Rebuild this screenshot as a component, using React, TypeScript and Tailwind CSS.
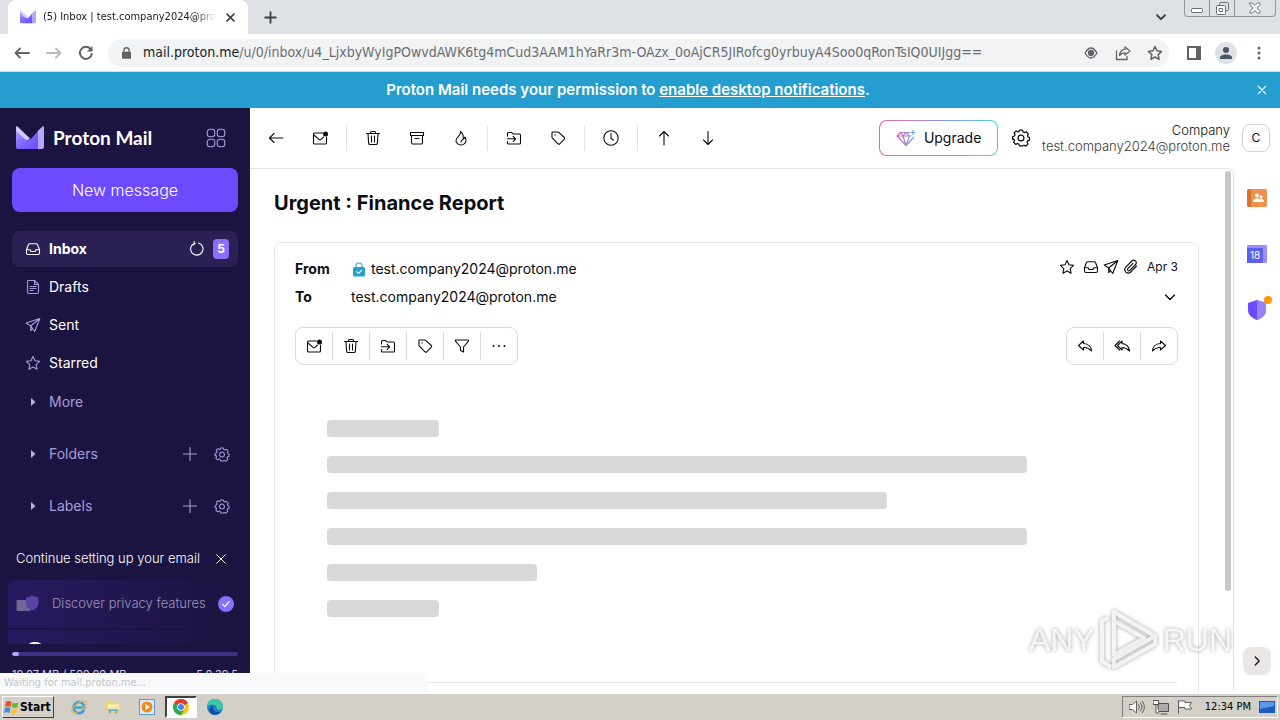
import React from 'react'

const stroke = { fill: 'none', stroke: 'currentColor', strokeLinecap: 'round', strokeLinejoin: 'round' } as const

const paths: Record<string, string> = {
  back: 'M15 8H1.5M6 3.5L1.5 8L6 12.5',
  up: 'M8 15V1.5M3.5 6L8 1.5L12.5 6',
  down: 'M8 1.5V14.5M3.5 10L8 14.5L12.5 10',
  trash: 'M1.5 3.5h13M5.5 3.5v-1a1 1 0 0 1 1-1h3a1 1 0 0 1 1 1v1M3 3.5l.6 9.6a1.5 1.5 0 0 0 1.5 1.4h5.8a1.5 1.5 0 0 0 1.5-1.4L13 3.5M6.5 6v6M9.5 6v6',
  archive: 'M1.5 2.5h13v3h-13zM2.5 5.5v7a1.5 1.5 0 0 0 1.5 1.5h8a1.5 1.5 0 0 0 1.5-1.5v-7M6 8.5h4',
  fire: 'M7.5 1.5c.5 2.5-1 3.8-2.3 5.2C3.6 8.2 3 9 3 10.5a4.9 4.4 0 0 0 10 0c0-1.3-.4-2.600-1-3.500-.4 1.200-1 1.700-1.800 1.900C10.600 6 9.800 3 7.500 1.500zM12 8c-1.500 1-4 1.500-4 4',
  move: 'M1.5 6V3.5a1 1 0 0 1 1-1h3.200l1.300 1.500h6.500a1 1 0 0 1 1 1v8a1 1 0 0 1-1 1h-11a1 1 0 0 1-1-1V11.500M1.500 8.800h8M7.200 6.300l2.500 2.500-2.500 2.500',
  tag: 'M2 2.5v4.700a1.500 1.500 0 0 0 .4 1l5.600 5.600a1.200 1.200 0 0 0 1.700 0l4.600-4.600a1.200 1.200 0 0 0 0-1.700L8.700 2.400a1.500 1.500 0 0 0-1-.4H2.500a.5.5 0 0 0-.5.5z',
  clock: 'M8 .8a7.200 7.200 0 1 1 0 14.400A7.200 7.200 0 0 1 8 .8zM8 3.500v5l2.500 1.500',
  filter: 'M1.5 2h13v1.200L9.500 9v5l-3-1.500V9L1.500 3.200z',
  reply: 'M6.5 3L1.500 7.500l5 4.500V9.500c3.500-.3 5.500.8 8 3.500 0-4-3-7.200-8-7.500z',
  replyAll: 'M8 3L3.500 7.500 8 12V9.500c3 0 5 1 7.500 3.500-.5-4-3-7-7.500-7.500zM5.500 3L1 7.500 5.500 12',
  forward: 'M9.5 3l5 4.500-5 4.500V9.500c-3.500-.3-5.500.8-8 3.500 0-4 3-7.200 8-7.500z',
  star: 'M8 1.5l2 4.300 4.600.6-3.400 3.200.9 4.700L8 12l-4.100 2.300.9-4.700L1.400 6.400 6 5.800z',
  inbox: 'M1.5 8.800l1.900-5a1.500 1.500 0 0 1 1.400-1h6.400a1.500 1.500 0 0 1 1.400 1l1.900 5v3.200a1.500 1.500 0 0 1-1.500 1.500h-10a1.500 1.500 0 0 1-1.500-1.500zM1.500 8.800h3.700l.8 1.700h4l.8-1.700h3.700',
  plane: 'M14.800 1.500L1.200 6l4.500 3 4 5.500zM14.800 1.500L5.700 9v4.500l1.900-2',
  clip: 'M13.500 7l-5.800 6a3.400 3.400 0 0 1-4.900-4.800l6-6.200a2.500 2.500 0 0 1 3.700 3.500l-5.700 5.900a1.300 1.300 0 0 1-1.900-1.800l5-5.200',
  draft: 'M3 1.500h6.500l4 4V13a1.500 1.500 0 0 1-1.500 1.500H4A1.500 1.500 0 0 1 2.500 13V2a.5.5 0 0 1 .5-.5zM9.500 1.500v4h4M5 7.500h6M5 9.500h6M5 11.500h3',
  refresh: 'M5.500 2.200A6.200 6.200 0 1 0 9.500 2M5 .5l1 2-2 1.500',
  plus: 'M8 1.500v13M1.500 8h13',
  close: 'M3 3l10 10M13 3L3 13',
  chevDown: 'M3.500 6L8 10.500 12.500 6',
  chevRight: 'M6 3.500L10.500 8 6 12.500',
  apps: 'M3.200 1h1.600A2.200 2.200 0 0 1 7 3.200v1.600A2.200 2.200 0 0 1 4.800 7H3.200A2.200 2.200 0 0 1 1 4.800V3.200A2.200 2.200 0 0 1 3.200 1zM11.200 1h1.600A2.200 2.200 0 0 1 15 3.200v1.600A2.200 2.200 0 0 1 12.800 7h-1.600A2.200 2.200 0 0 1 9 4.800V3.200A2.200 2.200 0 0 1 11.200 1zM3.200 9h1.600A2.200 2.200 0 0 1 7 11.200v1.600A2.200 2.200 0 0 1 4.800 15H3.200A2.200 2.200 0 0 1 1 12.800v-1.600A2.200 2.200 0 0 1 3.200 9zM11.200 9h1.600a2.200 2.200 0 0 1 2.200 2.200v1.600a2.200 2.200 0 0 1-2.200 2.200h-1.600A2.200 2.200 0 0 1 9 12.800v-1.600A2.200 2.200 0 0 1 11.200 9z',
  gear: 'M6.600 1h2.800l.5 1.700 1.200.5 1.600-.8 1.900 1.900-.8 1.600.5 1.200 1.200.4v2.400l-1.600.6-.5 1.200.8 1.600-1.900 1.900-1.600-.8-1.200.5L9.400 15H6.600L6.100 13.400l-1.200-.5-1.600.8-1.900-1.900.8-1.600-.5-1.200L.6 9.200V6.800l1.600-.6.5-1.200-.8-1.600 1.900-1.700 1.500.9 1-.5zM8 5.400a2.600 2.600 0 1 1 0 5.200 2.600 2.600 0 0 1 0-5.200z',
}

const Icon = (props: { name: string; className?: string; width?: number }) => (
  <svg viewBox="0 0 16 16" strokeWidth={props.width ?? 1.1} {...stroke} className={props.className ?? 'w-4 h-4'} aria-hidden="true">
    <path d={paths[props.name]} />
    {props.name === 'tag' && <circle cx="5" cy="5" r="0.7" fill="currentColor" stroke="none" />}
  </svg>
)

const UnreadIcon = () => (
  <svg viewBox="0 0 16 16" strokeWidth="1.1" {...stroke} className="w-4 h-4" aria-hidden="true">
    <path d="M10.5 3H2.5A1 1 0 0 0 1.5 4v9a1 1 0 0 0 1 1h11a1 1 0 0 0 1-1V7M2 5l5 4.3a1.5 1.5 0 0 0 2 0L11.500 7" />
    <circle cx="13.5" cy="4" r="2.500" fill="currentColor" stroke="none" />
  </svg>
)

const DotsIcon = () => (
  <svg viewBox="0 0 16 16" fill="currentColor" className="w-4 h-4" aria-hidden="true">
    <circle cx="2.5" cy="8" r="1" />
    <circle cx="8" cy="8" r="1" />
    <circle cx="13.5" cy="8" r="1" />
  </svg>
)

const ProtonMark = (props: { id: string; className: string }) => (
  <svg viewBox="0 0 28 24" className={props.className} aria-hidden="true">
    <defs>
      <linearGradient id={props.id} x1="0" y1="0" x2="1" y2="1">
        <stop offset="0" stopColor="#b5a5ff" />
        <stop offset="0.5" stopColor="#8069ff" />
        <stop offset="1" stopColor="#6d4aff" />
      </linearGradient>
    </defs>
    <path d="M0 1.500v19.500a2 2 0 0 0 2 2h20V5l-6.500 7.500a4 4 0 0 1-5 .2z" fill={`url(#${props.id})`} />
    <path d="M0 1.200c0-.8.9-1.200 1.500-.7L14 12.500l-1.500 1a3 3 0 0 1-3.500-.2L0 5z" fill="#d5c9ff" />
    <path d="M28 1.200c0-.8-.9-1.200-1.500-.7L22 4.800V23h4a2 2 0 0 0 2-2z" fill="#b9a6ff" />
  </svg>
)

const TabStrip = () => (
  <header className="flex h-[34px] shrink-0 items-stretch bg-[#dee1e6] font-['DejaVu_Sans_Condensed','DejaVu_Sans',sans-serif]">
    <div className="ml-2 flex w-60 items-center rounded-t-lg bg-white pl-3 pr-3">
      <ProtonMark id="tabMark" className="h-[14px] w-4 shrink-0" />
      <span className="ml-[7px] w-[174px] overflow-hidden whitespace-nowrap text-[11px] text-[#202124] [mask-image:linear-gradient(to_right,black_88%,transparent)]">
        (5) Inbox | test.company2024@proton.me
      </span>
      <button aria-label="Close tab" className="ml-[9px] text-[#3c4043]"><Icon name="close" width={2.4} className="h-[11px] w-[11px]" /></button>
    </div>
    <button aria-label="New tab" className="ml-4 text-[#3c4043]"><Icon name="plus" width={2.2} className="h-[13px] w-[13px]" /></button>
    <div className="flex-1" />
    <button aria-label="Search tabs" className="mr-4 text-[#3c4043]"><Icon name="chevDown" width={2.2} className="h-[14px] w-[14px]" /></button>
    <div className="mr-1 flex h-[17px] rounded-b border border-t-0 border-[#90959d] text-[#6b7078]">
      <button aria-label="Minimize" className="flex w-[25px] items-center justify-center border-r border-[#90959d]">
        <svg viewBox="0 0 12 12" {...stroke} className="h-3 w-3"><rect x="0.5" y="6.5" width="11" height="4" rx="1" fill="#fff" /></svg>
      </button>
      <button aria-label="Restore" className="flex w-[25px] items-center justify-center border-r border-[#90959d]">
        <svg viewBox="0 0 13 13" {...stroke} className="h-[13px] w-[13px]"><rect x="3.5" y="0.5" width="9" height="8" rx="1" /><rect x="0.5" y="3.5" width="9" height="9" rx="1" fill="#fff" /><rect x="3.5" y="6.5" width="3" height="3" /></svg>
      </button>
      <button aria-label="Close" className="flex w-10 items-center justify-center">
        <svg viewBox="0 0 12 12" {...stroke} className="h-3 w-3"><path d="M1 1h2.500L6 3.500 8.500 1H11v1.500L8 6l3 3.500V11H8.500L6 8.500 3.500 11H1V9.500L4 6 1 2.500z" fill="#fff" /></svg>
      </button>
    </div>
  </header>
)

const AddressBar = () => (
  <div className="flex h-[38px] shrink-0 items-center border-b border-[#dadce0] bg-white text-[#5f6368]">
    <button aria-label="Back" className="ml-3.5"><Icon name="back" width={1.8} /></button>
    <button aria-label="Forward" className="ml-4 text-[#b8babd]"><Icon name="back" width={1.8} className="h-4 w-4 rotate-180" /></button>
    <button aria-label="Reload" className="ml-4">
      <svg viewBox="0 0 16 16" {...stroke} strokeWidth="2" className="h-4 w-4"><path d="M13.800 9A6 6 0 1 1 12.500 4" /><path d="M14.500 1v5.500H9z" fill="currentColor" stroke="none" /></svg>
    </button>
    <div className="ml-3.5 flex h-7 flex-1 items-center rounded-full bg-[#f1f3f4] pl-3.5 pr-1.5">
      <svg viewBox="0 0 10 13" className="h-3 w-[9px] shrink-0" aria-hidden="true"><rect y="5" width="10" height="8" rx="1" fill="#5f6368" /><path d="M2.200 5.500V3.500a2.800 2.800 0 0 1 5.600 0v2" fill="none" stroke="#5f6368" strokeWidth="1.500" /></svg>
      <div className="ml-3 flex-1 whitespace-nowrap font-['DejaVu_Sans_Condensed','DejaVu_Sans',sans-serif] text-[14px] text-[#6a6e73]">
        <span className="text-[#202124]">mail.proton.me</span>/u/0/inbox/u4_LjxbyWyIgPOwvdAWK6tg4mCud3AAM1hYaRr3m-OAzx_0oAjCR5JIRofcg0yrbuyA4Soo0qRonTsIQ0UIJgg==
      </div>
      <div className="flex items-center gap-4">
        <svg viewBox="0 0 16 16" {...stroke} strokeWidth="1.3" className="h-4 w-4"><path d="M2 8q6-10 12 0q-6 10-12 0z" /><circle cx="8" cy="8" r="2.5" fill="currentColor" /></svg>
        <svg viewBox="0 0 16 16" {...stroke} strokeWidth="1.3" className="h-4 w-4"><path d="M1.500 6v8.500h10.500v-3M10 2l5 4-5 4V7.800C7.500 7.800 6 8.500 4.500 10.500 5 6.500 7 4.500 10 4.200z" /></svg>
        <Icon name="star" width={1.5} />
      </div>
    </div>
    <svg viewBox="0 0 14 14" className="ml-[18px] h-3.5 w-3.5" aria-hidden="true"><path d="M1 1h12v12H1z" fill="none" stroke="#5f6368" strokeWidth="2" /><path d="M9 1h4v12H9z" fill="#5f6368" /></svg>
    <button aria-label="Profile" className="ml-3.5 flex h-[22px] w-[22px] items-center justify-center rounded-full bg-[#dee1e6]">
      <svg viewBox="0 0 12 12" className="h-3 w-3" fill="#4a5568"><circle cx="6" cy="3" r="3" /><path d="M0 12V10.500C0 8.500 3 7.500 6 7.500s6 1 6 3V12z" /></svg>
    </button>
    <button aria-label="Menu" className="ml-[14px] mr-[13px]">
      <svg viewBox="0 0 16 16" fill="currentColor" className="h-4 w-4"><circle cx="8" cy="3" r="1.5" /><circle cx="8" cy="8" r="1.5" /><circle cx="8" cy="13" r="1.5" /></svg>
    </button>
  </div>
)

const Banner = () => (
  <div className="flex h-9 shrink-0 items-center bg-[#239ece] text-[15px] font-semibold text-white">
    <p className="flex-1 text-center">
      Proton Mail needs your permission to <a href="#notifications" className="underline">enable desktop notifications</a>.
    </p>
    <button aria-label="Dismiss" className="mr-3"><Icon name="close" width={1.5} className="h-3 w-3" /></button>
  </div>
)

const folders = [
  { name: 'Inbox', icon: 'inbox' },
  { name: 'Drafts', icon: 'draft' },
  { name: 'Sent', icon: 'plane' },
  { name: 'Starred', icon: 'star' },
]

const Caret = () => <svg viewBox="0 0 16 16" className="h-4 w-4" fill="#b9b0e0"><path d="M6 4L10.500 8 6 12z" /></svg>

const Section = (props: { name: string }) => (
  <div className="mt-4 flex h-9 items-center pl-[13px] pr-2 text-[#a79ddb]">
    <Caret />
    <a href={`#${props.name}`} className="ml-2 flex-1 text-sm">{props.name}</a>
    <button aria-label={`Add to ${props.name}`}><Icon name="plus" /></button>
    <button aria-label={`${props.name} settings`} className="ml-4"><Icon name="gear" className="h-[15px] w-4" /></button>
  </div>
)

const Sidebar = () => (
  <aside className="flex w-[250px] shrink-0 flex-col overflow-hidden bg-[#1b1340] text-white">
    <div className="flex h-[60px] shrink-0 items-center pl-4 pr-6">
      <ProtonMark id="sideMark" className="h-6 w-7" />
      <span className="ml-[9px] flex-1 whitespace-nowrap font-['Lato',sans-serif] text-[19px] font-bold">Proton Mail</span>
      <button aria-label="Proton apps" className="text-[#a79ddb]"><Icon name="apps" width={0.9} className="h-5 w-5" /></button>
    </div>
    <button className="mx-3 h-11 shrink-0 rounded-lg bg-[#6d4aff] text-base font-light">New message</button>
    <nav className="mx-3 mt-[19px] flex shrink-0 flex-col">
      <ul className="flex flex-col gap-0.5">
        {folders.map((f, i) => (
          <li key={f.name} className={`flex h-9 items-center rounded-lg pl-[13px] pr-[9px] ${i === 0 ? 'bg-[#2a2053]' : ''}`}>
            <a href={`#${f.name}`} className={`flex flex-1 items-center gap-2 text-sm ${i === 0 ? 'font-bold' : ''}`}>
              <Icon name={f.icon} className={i === 0 ? 'h-4 w-4' : 'h-4 w-4 text-[#a79ddb]'} />
              {f.name}
            </a>
            {i === 0 && (
              <>
                <button aria-label="Refresh"><Icon name="refresh" className="h-4 w-4" /></button>
                <span className="ml-2 flex h-5 w-4 items-center justify-center rounded bg-[#8a6eff] text-xs font-bold">5</span>
              </>
            )}
          </li>
        ))}
      </ul>
      <div className="mt-[3px] flex h-9 items-center pl-[13px] text-[#a79ddb]">
        <Caret />
        <a href="#More" className="ml-2 text-sm">More</a>
      </div>
      <Section name="Folders" />
      <Section name="Labels" />
    </nav>
    <div className="mt-5 flex h-[30px] shrink-0 items-center pl-4 pr-[22px]">
      <h2 className="flex-1 whitespace-nowrap text-[13px] font-light">Continue setting up your email</h2>
      <button aria-label="Hide checklist"><Icon name="close" className="h-3.5 w-3.5" /></button>
    </div>
    <ul className="mx-2 mt-1.5 flex h-16 shrink-0 flex-col gap-0.5 overflow-hidden rounded-t-lg">
      <li className="flex h-12 shrink-0 items-center bg-linear-to-r from-[#27195f] to-[#1b1340] pl-2 pr-2">
        <svg viewBox="0 0 24 18" className="h-[18px] w-6" aria-hidden="true"><rect x="0.5" y="5" width="14" height="11" rx="1" fill="#6f6694" /><path d="M10 3l6-2.500L22.500 2.500v6c0 3-3 5.500-6 7-3.500-1.500-6.500-4-6.500-7z" fill="#5a42a8" /></svg>
        <span className="ml-3 flex-1 whitespace-nowrap text-[13px] font-light text-[#9d96b8]">Discover privacy features</span>
        <span className="flex h-4 w-4 items-center justify-center rounded-full bg-[#8a6eff]">
          <svg viewBox="0 0 16 16" {...stroke} strokeWidth="1.5" className="h-3 w-3"><path d="M3.500 8.500l3 3 6-7" /></svg>
        </span>
      </li>
      <li className="flex h-12 shrink-0 bg-linear-to-r from-[#27195f] to-[#1b1340] pl-[18px] pt-3">
        <span className="h-4 w-[18px] rounded-full bg-white" />
      </li>
    </ul>
    <div className="mx-3 mt-2 h-1 shrink-0 overflow-hidden rounded-full bg-[#3f2f85]">
      <div className="h-full w-[7px] rounded-full bg-[#b9a6ff]" />
    </div>
    <div className="mx-3 mt-2.5 flex justify-between whitespace-nowrap text-[11px] text-[#cfc9ea]">
      <span>19.07 MB / 500.00 MB</span>
      <span>5.0.39.5</span>
    </div>
  </aside>
)

const toolbar = [['back', 'unread'], ['trash', 'archive', 'fire'], ['move', 'tag'], ['clock'], ['up', 'down']]

const Toolbar = () => (
  <div className="flex h-[60px] shrink-0 items-center pl-1 pr-2.5">
    {toolbar.map((group, i) => (
      <div key={i} className="flex items-center">
        {i > 0 && <div className="mx-1 h-[26px] w-px bg-[#e4e4e6]" />}
        {group.map((name) => (
          <button key={name} aria-label={name} className="flex h-9 w-11 items-center justify-center">
            {name === 'unread' ? <UnreadIcon /> : <Icon name={name} />}
          </button>
        ))}
      </div>
    ))}
    <div className="flex-1" />
    <div className="rounded-lg bg-linear-to-r from-[#ee5fb0] via-[#8f8fe0] to-[#3fd0e0] p-px">
      <button className="flex h-[34px] w-[117px] items-center justify-center gap-2 rounded-[7px] bg-white text-sm">
        <svg viewBox="0 0 20 18" className="h-[18px] w-5" aria-hidden="true" fill="none" stroke="url(#gem)" strokeWidth="1.2" strokeLinejoin="round">
          <defs>
            <linearGradient id="gem" x1="0" y1="0" x2="1" y2="0"><stop offset="0" stopColor="#ee5fb0" /><stop offset="1" stopColor="#4fb8f0" /></linearGradient>
          </defs>
          <path d="M14 3.500H4.500L1 7l9 9.500L18 8M1 7h14.500M4.500 3.500L7 7l3 9.500L13.500 7 10 3.500 7 7M17 1v5M14.500 3.500h5" />
        </svg>
        Upgrade
      </button>
    </div>
    <button aria-label="Settings" className="ml-3.5"><Icon name="gear" width={1.1} className="h-[18px] w-[18px]" /></button>
    <div className="ml-3 text-right text-[13px] font-light leading-4">
      <p>Company</p>
      <p className="text-[#3c3938]">test.company2024@proton.me</p>
    </div>
    <button className="ml-3 h-7 w-7 rounded-lg border border-[#d4d2d0] text-xs">C</button>
  </div>
)

const ActionGroup = (props: { icons: string[] }) => (
  <div className="flex h-[38px] items-center rounded-lg border border-[#dddbd9]">
    {props.icons.map((name, i) => (
      <React.Fragment key={name}>
        {i > 0 && <div className="h-7 w-px bg-[#dddbd9]" />}
        <button aria-label={name} className="flex h-9 w-9 items-center justify-center">
          {name === 'unread' ? <UnreadIcon /> : name === 'dots' ? <DotsIcon /> : <Icon name={name} />}
        </button>
      </React.Fragment>
    ))}
  </div>
)

const lines = ['w-28', 'w-[700px]', 'w-[560px]', 'w-[700px]', 'w-[210px]', 'w-28']

const Message = () => (
  <article className="mt-[25px] rounded-lg border border-[#e8e7e6] px-5 pt-3">
    <div className="flex h-7 items-center text-sm">
      <span className="w-14 font-bold">From</span>
      <svg viewBox="0 0 14 16" className="h-4 w-4" aria-hidden="true"><path d="M4 7V5a3 3 0 0 1 6 0v2" fill="none" stroke="#6fc4e4" strokeWidth="1.500" /><rect x="1" y="6" width="12" height="9.500" rx="1.500" fill="#239ece" /><path d="M4.500 10.500l2 2 3.500-3.500" fill="none" stroke="#fff" strokeWidth="1.200" /></svg>
      <span className="ml-1 flex-1">test.company2024@proton.me</span>
      <div className="flex items-center gap-1 pb-1">
        <button aria-label="Star" className="mr-1"><Icon name="star" /></button>
        <Icon name="inbox" />
        <Icon name="plane" />
        <Icon name="clip" />
        <time className="ml-1 text-xs">Apr 3</time>
      </div>
    </div>
    <div className="flex h-7 items-center text-sm">
      <span className="w-14 font-bold">To</span>
      <span className="flex-1">test.company2024@proton.me</span>
      <button aria-label="Show details"><Icon name="chevDown" width={1.4} /></button>
    </div>
    <div className="mt-4 flex justify-between">
      <ActionGroup icons={['unread', 'trash', 'move', 'tag', 'filter', 'dots']} />
      <ActionGroup icons={['reply', 'replyAll', 'forward']} />
    </div>
    <div className="mt-[55px] flex h-[262px] flex-col gap-[19px] px-8">
      {lines.map((w, i) => <div key={i} className={`h-[17px] max-w-full shrink-0 rounded bg-[#d8d8d8] ${w}`} />)}
    </div>
    <div className="h-16 border-t border-[#e8e7e6]" />
  </article>
)

const Watermark = () => (
  <div className="pointer-events-none absolute bottom-5 right-12 flex h-16 items-center gap-1 whitespace-nowrap font-['Liberation_Sans',sans-serif] text-[32px] leading-none text-white/80 drop-shadow-[0_0_2px_rgba(0,0,0,0.45)]">
    <span>ANY</span>
    <svg viewBox="0 0 60 62" className="h-[62px] w-[60px]" fill="none" stroke="currentColor" strokeWidth="4" strokeLinejoin="round" aria-hidden="true">
      <path d="M15 12v34l30-17zM9 9L3 12v40l9 6M15 12V3l41 24M15 58L56 35v-8L15 50z" />
    </svg>
    <span>RUN</span>
  </div>
)

const AppRail = () => (
  <aside className="flex w-[46px] shrink-0 flex-col items-center pb-[17px] pt-[21px]">
    <a href="#contacts" aria-label="Contacts">
      <svg viewBox="0 0 20 18" className="h-[18px] w-5"><rect width="20" height="18" rx="2" fill="#f0914a" /><path d="M0 2a2 2 0 0 1 2-2h2v18H2a2 2 0 0 1-2-2z" fill="#d9702e" /><g fill="#fff"><circle cx="10" cy="6.5" r="2" /><path d="M6 13c0-5 8-5 8 0z" /><circle cx="14" cy="8" r="1.5" /><path d="M13.500 13H17c0-3-2-3.500-3.500-3z" /></g></svg>
    </a>
    <a href="#calendar" aria-label="Calendar" className="relative mt-[38px]">
      <svg viewBox="0 0 20 18" className="h-[18px] w-5"><rect width="20" height="18" rx="1" fill="#9f8bff" /><path d="M0 3h16v15H0z" fill="#5d5fe8" /></svg>
      <span className="absolute left-[3px] top-1 text-[10px] leading-3 text-white">18</span>
    </a>
    <a href="#security" aria-label="Security center" className="relative mt-[37px]">
      <svg viewBox="0 0 18 20" className="h-5 w-[18px]"><path d="M9 0l9 3v7c0 5-4 8-9 10-5-2-9-5-9-10V3z" fill="#6d4aff" /><path d="M9 0l9 3v7c0 5-4 8-9 10z" fill="#9a82ff" /></svg>
      <span className="absolute -right-1.5 -top-1 h-2 w-2 rounded-full bg-[#ff9900]" />
    </a>
    <div className="flex-1" />
    <button aria-label="Collapse" className="flex h-7 w-7 items-center justify-center rounded-lg bg-[#eae7e6]"><Icon name="chevRight" width={1.5} className="h-3.5 w-3.5" /></button>
  </aside>
)

const Taskbar = () => (
  <footer className="flex h-7 shrink-0 items-center border-t-2 border-white bg-[#d4d0c8] pl-0.5 font-['DejaVu_Sans_Condensed','DejaVu_Sans',sans-serif] text-[11px] text-black">
    <button className="flex h-[22px] w-[52px] items-center border border-b-[#404040] border-l-white border-r-[#404040] border-t-white pl-px text-xs font-bold">
      <svg viewBox="0 0 16 16" className="h-4 w-4 shrink-0" aria-hidden="true"><path d="M2 3c2-1.500 4-1 5.500 0L6.500 8C5 7 3 7 1 8z" fill="#e8502c" /><path d="M8.500 3.500c2 1 4 1 6-.5l-1 5c-2 1.500-4 1-6 0z" fill="#72b43a" /><path d="M1 9c2-1 4-1 5.300 0l-1 5c-1.500-1-3.500-1-5.300 0z" fill="#3a8be0" /><path d="M7.300 9.500c2 1 4 1 6-.5l-1 5c-2 1.500-4 1-6 0z" fill="#f8c52c" /></svg>
      Start
    </button>
    <div className="ml-[9px] flex items-center gap-0.5">
      <button aria-label="Internet Explorer" className="flex h-[22px] w-8 items-center justify-center">
        <svg viewBox="0 0 18 18" {...stroke} className="h-[18px] w-[18px]"><path d="M5 9.500h9.500a5.500 5.500 0 1 0-.8 3" stroke="#3ba0e6" strokeWidth="2.6" /><ellipse cx="9" cy="9" rx="9" ry="3.5" transform="rotate(-35 9 9)" stroke="#e8b93a" strokeWidth="1.1" /></svg>
      </button>
      <button aria-label="Explorer" className="flex h-[22px] w-8 items-center justify-center">
        <svg viewBox="0 0 18 18" className="h-4 w-4"><path d="M1 4l2-2h5l1 2h7v12H1z" fill="#ecd27a" /><path d="M3 6h13v5H3z" fill="#f9edb5" /><path d="M4 16v-4.500h10V16h-2.500v-2.500h-5V16z" fill="#5db4e2" /></svg>
      </button>
      <button aria-label="Media Player" className="flex h-[22px] w-8 items-center justify-center">
        <svg viewBox="0 0 16 16" className="h-4 w-4"><rect x="0.5" y="0.5" width="15" height="15" fill="#dceaf5" stroke="#5a9bd0" /><circle cx="8" cy="8" r="5.5" fill="#f08a1c" /><path d="M6.500 5l4.500 3-4.500 3z" fill="#fff" /></svg>
      </button>
      <button aria-label="Chrome" className="flex h-[22px] w-8 items-center justify-center border-2 border-b-white border-l-[#404040] border-r-white border-t-[#404040] bg-white">
        <svg viewBox="0 0 16 16" className="h-4 w-4"><circle cx="8" cy="8" r="8" fill="#fbc116" /><path d="M8 8L1.070 4A8 8 0 0 1 14.930 4z" fill="#e33b2e" /><path d="M8 8L1.070 4A8 8 0 0 0 8 16l3.500-6z" fill="#2da94f" /><circle cx="8" cy="8" r="3.8" fill="#fff" /><circle cx="8" cy="8" r="3" fill="#4285f4" /></svg>
      </button>
      <button aria-label="Edge" className="flex h-[22px] w-8 items-center justify-center">
        <svg viewBox="0 0 16 16" className="h-4 w-4"><circle cx="8" cy="8" r="8" fill="#1b7fd0" /><path d="M0 8a8 8 0 0 1 16-1c.2 3-2 4-4.500 3.800C9.500 10.700 10 9 9.500 8 8 5 3 4.500 0 8z" fill="#3fc8a8" /><path d="M6 9c0 3.500 3.500 5 8 3.500-3 4.500-8.500 4-11 1C1.500 10.500 3.500 7 7 7c-.7.500-1 1-1 2z" fill="#0f4f9e" /></svg>
      </button>
    </div>
    <div className="flex-1" />
    <div className="mr-0.5 flex h-[22px] items-center gap-2 border border-b-white border-l-[#808080] border-r-white border-t-[#808080] pl-1.5 pr-0.5">
      <svg viewBox="0 0 16 16" {...stroke} className="h-4 w-4 text-[#606060]"><path d="M.5 5.500h3L7.500 2v12L3.500 10.500h-3z" fill="#fff" /><path d="M9.500 5.500q2 2.500 0 5M11.500 4q3 4 0 8M13.500 2.500q4 5.500 0 11" /></svg>
      <svg viewBox="0 0 16 16" {...stroke} className="h-4 w-4 text-[#505050]"><path d="M5.500 4.500h10v8h-10zM8 15h6" fill="#aaa" /><path d="M.5 1.500h5v4h-5zM3 5.500V14h3" fill="#fff" /></svg>
      <svg viewBox="0 0 16 16" {...stroke} className="h-4 w-4 text-[#606060]"><path d="M1.500 1.500v13" /><path d="M2 2h6v1.500h6.500l-2 3 2 3.500H8V8.500H2z" fill="#fff" /></svg>
      <span className="ml-1">12:34 PM</span>
      <svg viewBox="0 0 16 14" className="h-3.5 w-4"><rect y="1" width="16" height="12" fill="#1c5bb8" /><path d="M1 2h14v4L1 9z" fill="#5b9ae6" /></svg>
    </div>
  </footer>
)

export default function App() {
  return (
    <div className="flex h-screen flex-col overflow-hidden bg-white font-['Inter',sans-serif] text-[#0c0c14]">
      <TabStrip />
      <AddressBar />
      <Banner />
      <div className="relative flex min-h-0 flex-1">
        <Sidebar />
        <div className="flex min-w-0 flex-1 flex-col">
          <Toolbar />
          <div className="flex min-h-0 flex-1">
            <main className="flex min-w-0 flex-1 overflow-hidden rounded-tr-lg border-r border-t border-[#e4e4e6]">
              <div className="min-w-0 flex-1 pl-6 pr-[26px] pt-5">
                <h1 className="text-xl font-bold leading-7">Urgent : Finance Report</h1>
                <Message />
              </div>
              <div className="mr-0.5 mt-0.5 h-[420px] w-1.5 shrink-0 rounded-full bg-[#c8c8c8]" />
            </main>
            <AppRail />
          </div>
        </div>
        <Watermark />
        <div className="absolute bottom-0 left-0 flex h-[19px] w-1/3 items-center bg-[#f8f9fb] pl-1 pt-0.5 font-['DejaVu_Sans_Condensed','DejaVu_Sans',sans-serif] text-[11px] text-[#c4c6c8]">
          Waiting for mail.proton.me...
        </div>
      </div>
      <Taskbar />
    </div>
  )
}
